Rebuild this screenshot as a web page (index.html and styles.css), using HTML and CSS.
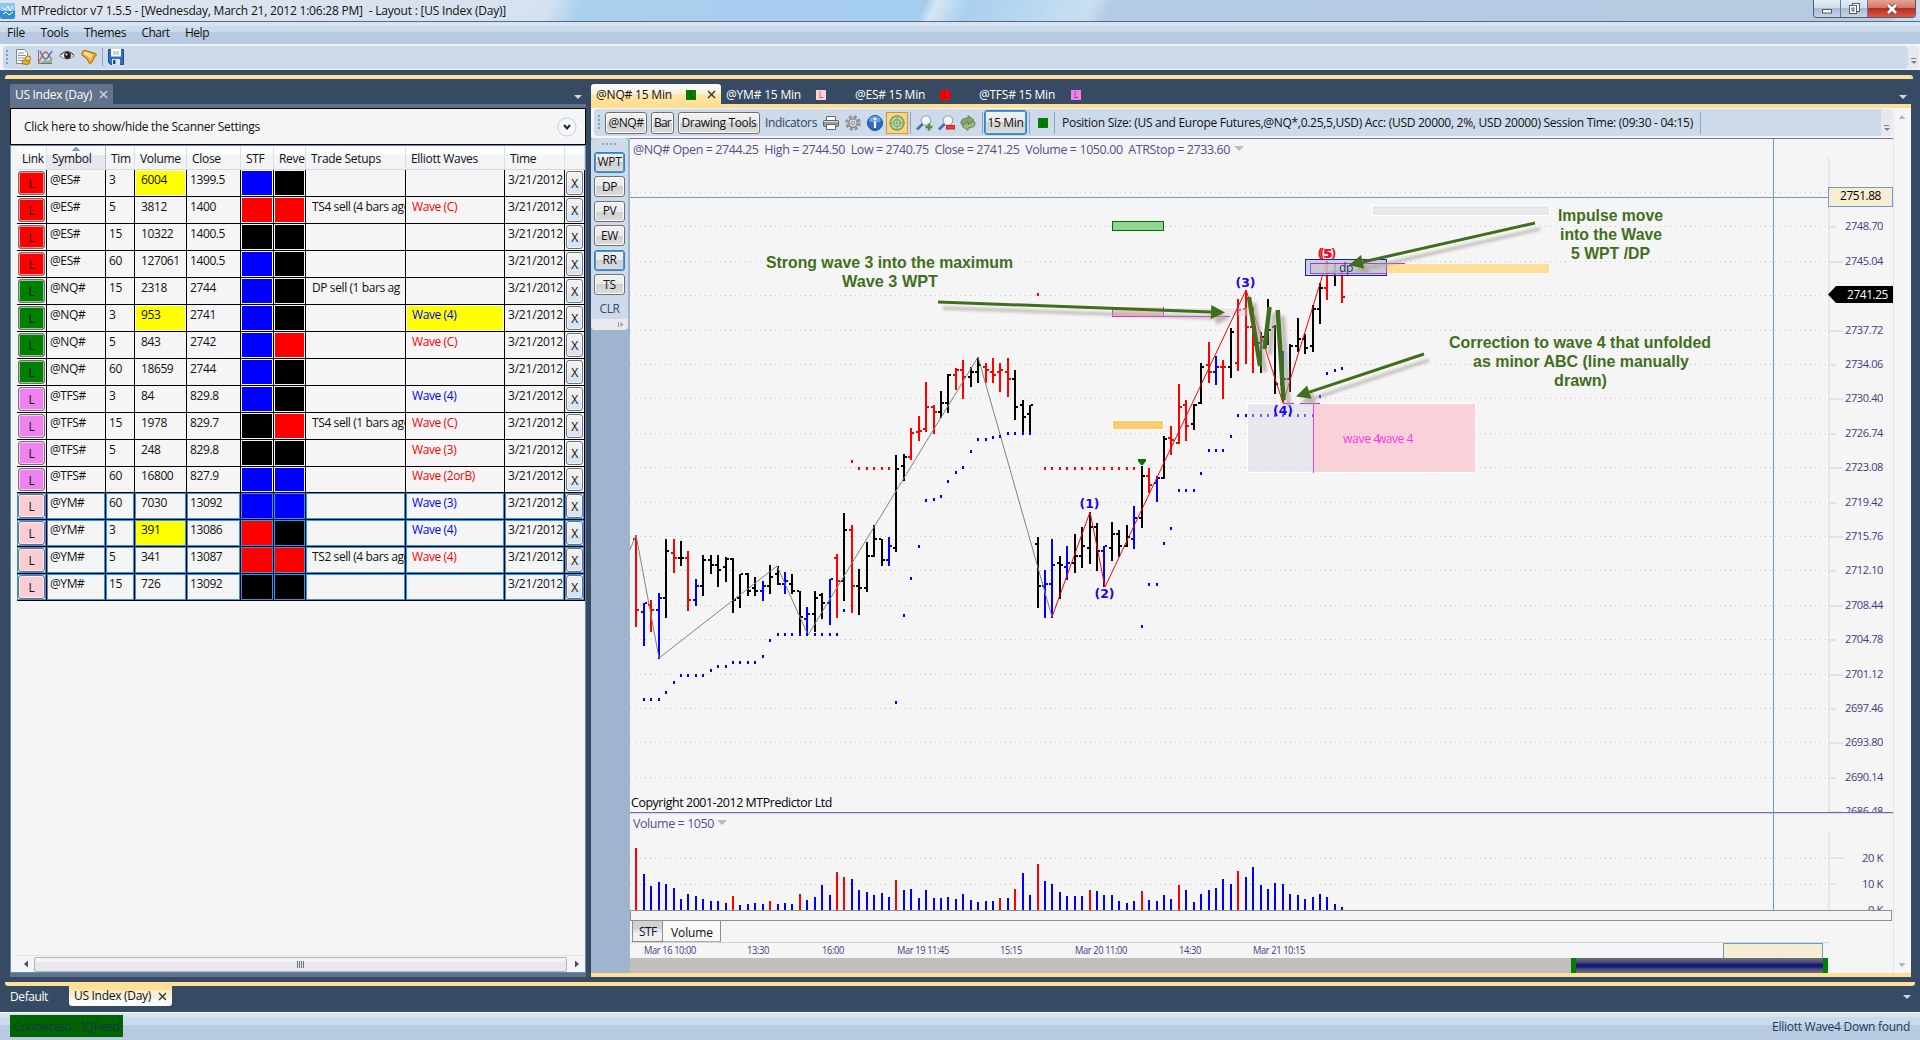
FILE: index.html
```
<!DOCTYPE html>
<html lang="en">
<head>
    <meta charset="UTF-8">
    <title>MTPredictor v7 1.5.5</title>
    <link rel="stylesheet" href="styles.css">
</head>

<body>

    <header class="titlebar">
        <svg class="app-icon" width="16" height="17" viewBox="0 0 16 17">
            <rect width="15" height="16" y="1" rx="2" fill="#2f8fd0"/>
            <rect width="15" height="8" y="1" rx="2" fill="#8cc9ee"/>
            <path d="M2 5l3 3 3-4 2 5 3-5M3 12l3-2 3 3 4-3" stroke="#fff" fill="none"/>
        </svg>
        <span class="title-text" data-w="485">MTPredictor v7 1.5.5 - [Wednesday, March 21, 2012 1:06:28 PM]&nbsp; - Layout : [US Index (Day)]</span>
        <div class="window-buttons">
            <div class="win-btn"><svg width="12" height="12"><rect x="1.5" y="6.5" width="9" height="3.5" fill="#fff" stroke="#555d6b"/></svg></div>
            <div class="win-btn"><svg width="13" height="13"><rect x="4.500" y="1.500" width="7" height="8" fill="#fff" stroke="#555d6b"/><rect x="1.500" y="3.500" width="7" height="8" fill="#fff" stroke="#555d6b"/><rect x="4" y="6" width="2" height="3" fill="none" stroke="#555d6b"/></svg></div>
            <div class="win-btn close"><svg width="14" height="12"><path d="M3 2l8 8M11 2l-8 8" stroke="#5b3a40" stroke-width="4.500"/><path d="M3 2l8 8M11 2l-8 8" stroke="#fff" stroke-width="2.800"/></svg></div>
        </div>
    </header>

    <nav class="menubar">
        <span data-w="18">File</span>
        <span data-w="28">Tools</span>
        <span data-w="42">Themes</span>
        <span data-w="28">Chart</span>
        <span data-w="24">Help</span>
    </nav>

    <div class="main-toolbar">
        <div class="toolbar-body">
            <i class="grip"></i>
            <svg width="16" height="16" viewBox="0 0 16 16"><path d="M1.500.5h8l3 3v11h-11z" fill="#fff" stroke="#7f8894"/><path d="M3 4h6M3 6.500h8M3 9h8M3 11.500h5" stroke="#8a929c"/><ellipse cx="11" cy="13" rx="4" ry="2.500" fill="#e2ad32" stroke="#a8730f"/><ellipse cx="13" cy="9.500" rx="2.600" ry="2.500" fill="#f5cf63" stroke="#a8730f"/></svg>
            <svg width="16" height="16" viewBox="0 0 16 16"><path d="M1.500 1v13.500H15" stroke="#777" fill="none"/><path d="M2 13L6 5q3-4 5 0l4 6" stroke="#e05a4a" fill="none" stroke-width="1.400"/><path d="M3 2l3 6q3 4 5 0l4-6" stroke="#4b74b8" fill="none" stroke-width="1.400"/><path d="M3 14l5-3 3 1 4-3v5z" fill="#8cb98a"/></svg>
            <svg width="16" height="16" viewBox="0 0 16 16"><path d="M.5 7Q8-1 15.500 7 8 13 .5 7z" fill="#e9e9ec" stroke="#8c8c92"/><path d="M1 6Q8-1 15 6" stroke="#444" fill="none"/><circle cx="8.500" cy="6.500" r="3.400" fill="#222"/><circle cx="7.500" cy="5.500" r="1" fill="#fff"/></svg>
            <svg width="16" height="16" viewBox="0 0 16 16"><path d="M1 4Q2 0 6 2l7 2 2 1q1 2-1 2l-3 6q-1 3-3 1Q7 9 2 7 0 6 1 4z" fill="#f0a830" stroke="#a96a12"/><path d="M2.500 4q2-2 5 0l4 2-2 5Q8 7 3 5.500z" fill="#fbdf95"/></svg>
            <i class="sep"></i>
            <svg width="16" height="16" viewBox="0 0 16 16"><path d="M.5.500h15v15h-13l-2-2z" fill="#2f6fc2" stroke="#1d4f98"/><rect x="3" y="0" width="10" height="7.500" fill="#fff"/><path d="M5 3h6M5 5h6" stroke="#8aa8d0"/><rect x="4" y="10" width="8" height="6" fill="#dfe6f0"/><rect x="5" y="11" width="2.500" height="4" fill="#1d4f98"/></svg>
        </div>
        <div class="overflow"><svg width="6" height="8"><path d="M0 .5h5" stroke="#7b828e"/><path d="M0 3h6L3 6z" fill="#7b828e"/></svg></div>
    </div>

    <main class="dock">
        <div class="dock-top"></div>
        <div class="panes">

            <section class="scanner">
                <div class="pane-tabs">
                    <div class="scan-tab"><span data-w="77">US Index (Day)</span><svg width="9" height="9"><path d="M1 1l7 7M8 1L1 8" stroke="#d5dbe6" stroke-width="1.300"/></svg></div>
                    <i class="tri"></i>
                </div>
                <div class="scan-settings">
                    <span data-w="236">Click here to show/hide the Scanner Settings</span>
                    <svg width="20" height="20"><circle cx="10" cy="10" r="9" fill="#f7f8fa" stroke="#bcd0e6"/><path d="M7 8l3 3.500L13 8" stroke="#1e2530" stroke-width="2" fill="none"/></svg>
                </div>
                <div class="scan-body">
                    <table class="scan-table">
                        <colgroup>
                            <col class="c-link"><col class="c-symbol"><col class="c-tim"><col class="c-volume"><col class="c-close"><col class="c-stf"><col class="c-reve"><col class="c-trade"><col class="c-elliott"><col class="c-time"><col class="c-del">
                        </colgroup>
                        <thead>
                            <tr>
                                <th>Link</th><th class="sorted">Symbol</th><th>Tim</th><th>Volume</th><th>Close</th><th>STF</th><th>Reve</th><th>Trade Setups</th><th>Elliott Waves</th><th>Time</th><th></th>
                            </tr>
                        </thead>
                        <tbody id="scan-rows"></tbody>
                    </table>
                    <div class="hscroll">
                        <i class="arrow left"></i>
                        <div class="thumb"><i></i><i></i><i></i><i></i></div>
                        <i class="arrow right"></i>
                    </div>
                </div>
                <div class="pane-foot"></div>
            </section>

            <section class="chart-pane">
                <div class="chart-tabs">
                    <div class="chart-tab active"><span data-w="76">@NQ# 15 Min</span><b class="chip green">L</b><svg width="9" height="9"><path d="M1 1l7 7M8 1L1 8" stroke="#333" stroke-width="1.400"/></svg></div>
                    <div class="chart-tab ym"><span data-w="75">@YM# 15 Min</span><b class="chip pink">L</b></div>
                    <div class="chart-tab es"><span data-w="70">@ES# 15 Min</span><b class="chip red">L</b></div>
                    <div class="chart-tab tfs"><span data-w="76">@TFS# 15 Min</span><b class="chip violet">L</b></div>
                    <i class="tri"></i>
                </div>
                <div class="chart-body">
                    <div class="chart-main">
                        <div class="chart-toolbar">
                            <i class="grip"></i>
                            <button class="b-sym"><span data-w="35">@NQ#</span></button>
                            <button class="b-bar"><span data-w="17">Bar</span></button>
                            <button class="b-draw"><span data-w="75">Drawing Tools</span></button>
                            <span class="indicators"><span data-w="52">Indicators</span></span>
                            <svg class="ico" width="16" height="16" viewBox="0 0 16 16"><path d="M3.500 6V1.500h9V6" fill="#fff" stroke="#666"/><rect x=".5" y="5.500" width="15" height="6" rx="1" fill="#999ea4" stroke="#5c6167"/><path d="M3.500 9.500h9v5h-9z" fill="#fff" stroke="#666"/><path d="M1 6.500h14" stroke="#d9dcdf"/></svg>
                            <svg class="ico" width="16" height="16" viewBox="0 0 16 16"><circle cx="8" cy="8" r="6.500" fill="none" stroke="#8d9094" stroke-width="2.500" stroke-dasharray="3 2.100"/><circle cx="8" cy="8" r="4.300" fill="#e0e2e4" stroke="#8d9094" stroke-width="1.800"/><circle cx="8" cy="8" r="1.800" fill="#ccdaea" stroke="#8d9094"/></svg>
                            <svg class="ico" width="16" height="16" viewBox="0 0 16 16"><circle cx="8" cy="8" r="7.500" fill="#2a6cc4" stroke="#1c4d94"/><path d="M2 6a6 5 0 0 1 12 0q-6 3-12 0z" fill="#6ea5e4"/><circle cx="8" cy="4" r="1.300" fill="#fff"/><path d="M8 6.500V13" stroke="#fff" stroke-width="2.200"/></svg>
                            <div class="target"><svg width="16" height="16" viewBox="0 0 16 16"><circle cx="8" cy="8" r="6.800" fill="#c9dcae" stroke="#7fa766" stroke-width="1.800"/><circle cx="8" cy="8" r="3.600" fill="none" stroke="#7fa766" stroke-width="1.500"/><path d="M8 0v16M0 8h16" stroke="#86a972"/></svg></div>
                            <i class="sep"></i>
                            <svg class="ico zoom" width="17" height="16" viewBox="0 0 17 16"><circle cx="10" cy="5.500" r="4.800" fill="#f3f7fb" stroke="#a5adb6" stroke-width="1.300"/><path d="M6.500 9L1 14.500" stroke="#3f6fb4" stroke-width="2.600"/><path d="M13 8.500v7M9.500 12h7" stroke="#5c8a3e" stroke-width="2.600"/></svg>
                            <svg class="ico zoom" width="17" height="16" viewBox="0 0 17 16"><circle cx="10" cy="5.500" r="4.800" fill="#f3f7fb" stroke="#a5adb6" stroke-width="1.300"/><path d="M6.500 9L1 14.500" stroke="#3f6fb4" stroke-width="2.600"/><rect x="8.500" y="10.500" width="8" height="3.500" fill="#f33" stroke="#c22"/></svg>
                            <svg class="ico" width="16" height="16" viewBox="0 0 16 16"><path d="M1 9Q0 3 8 3V.5L14 5 8 9V6.500q-3 0-4 3z" fill="#84a868" stroke="#587a43" stroke-width=".8"/><path d="M15 7q1 6-7 6v2.500L2 11l6-4v2.500q3 0 4-3z" fill="#9dba84" stroke="#587a43" stroke-width=".8"/></svg>
                            <i class="sep"></i>
                            <button class="b-min focus"><span data-w="36">15 Min</span></button>
                            <i class="sep"></i>
                            <b class="chip green">L</b>
                            <i class="sep"></i>
                            <span class="position"><span data-w="631">Position Size: (US and Europe Futures,@NQ*,0.25,5,USD) Acc: (USD 20000, 2%, USD 20000) Session Time: (09:30 - 04:15)</span></span>
                            <i class="sep"></i>
                            <div class="overflow"><svg width="6" height="8"><path d="M0 .5h5" stroke="#7b828e"/><path d="M0 3h6L3 6z" fill="#7b828e"/></svg></div>
                        </div>
                        <div class="chart-area">
                            <aside class="side-strip">
                                <div class="side-tools">
                                    <i class="hgrip"></i>
                                    <button class="focus"><span data-w="24">WPT</span></button>
                                    <button><span>DP</span></button>
                                    <button><span>PV</span></button>
                                    <button><span>EW</span></button>
                                    <button class="focus"><span>RR</span></button>
                                    <button><span>TS</span></button>
                                    <span class="clr"><span data-w="20">CLR</span></span>
                                </div>
                                <div class="side-end"><svg width="6" height="5"><path d="M.5 0v5" stroke="#999"/><path d="M2.500 0l3 2.500-3 2.500z" fill="#999"/></svg></div>
                            </aside>
                            <div class="charts">
                                <svg id="price" class="price" width="1263" height="674" viewBox="630 138 1263 674"></svg>
                                <svg id="volume" class="volume" width="1263" height="98" viewBox="630 812 1263 98"></svg>
                                <div class="splitter"></div>
                                <div class="sub-tabs"><span class="stf">STF</span><span class="vol">Volume</span></div>
                                <svg id="timeline" width="1263" height="15" viewBox="630 943 1263 15"></svg>
                                <div class="range"><i class="rest"></i><i class="handle"></i><i class="window"></i><i class="handle"></i></div>
                            </div>
                        </div>
                    </div>
                    <div class="vscroll"><i class="up"></i><i class="down"></i></div>
                </div>
                <div class="chart-foot"></div>
            </section>
        </div>
        <div class="layout-line"></div>
        <div class="layout-tabs">
            <span class="default"><span data-w="38">Default</span></span>
            <div class="layout-tab"><span data-w="77">US Index (Day)</span><svg width="9" height="9"><path d="M1 1l7 7M8 1L1 8" stroke="#333" stroke-width="1.400"/></svg></div>
            <i class="tri"></i>
        </div>
    </main>

    <footer class="statusbar">
        <div class="connected"><span data-w="107">Connected - IQFeed</span></div>
        <span data-w="138">Elliott Wave4 Down found</span>
    </footer>

    <script src="script.js"></script>
</body>
</html>
```
FILE: styles.css
```
* {
    box-sizing: border-box;
}

body {
    margin: 0;
    width: 1920px;
    height: 1040px;
    overflow: hidden;
    display: flex;
    flex-direction: column;
    font: 12px/16px "Open Sans", "Noto Sans", sans-serif;
    letter-spacing: -0.4px;
    color: #111;
    background: #374a63;
}

svg {
    display: block;
    flex: none;
}

span {
    white-space: nowrap;
}

/* title and menu */
.titlebar {
    height: 22px;
    display: flex;
    align-items: flex-start;
    border-bottom: 1px solid #566a82;
    background: linear-gradient(115deg, #dfe5ee 0, #d6e1ef 500px, #a9cfee 530px, #a5cdee 840px, #d7e6f4 850px, #a9cfee 880px, #c9dff2 990px, #b3cbe5 1010px, #b7cae0 1720px, #cddcec 1730px, #c9dbee 1800px, #a9cdee 1830px);
}

.app-icon {
    margin-top: 2px;
}

.title-text {
    margin: 3px 0 0 5px;
}

.window-buttons {
    display: flex;
    margin-left: auto;
    margin-right: 4px;
    height: 18px;
    border: 1px solid #4f5d70;
    border-top: 0;
    border-radius: 0 0 4px 4px;
    overflow: hidden;
}

.win-btn {
    width: 27px;
    display: flex;
    align-items: center;
    justify-content: center;
    border-right: 1px solid #6b7a8e;
    background: linear-gradient(#e4ecf5 0, #cfdbe9 50%, #a9bbd1 50%, #c5d5e7 100%);
}

.win-btn.close {
    width: 47px;
    border: 0;
    background: linear-gradient(#e6a497 0, #d4705f 50%, #b52d1b 50%, #d8594a 100%);
}

.menubar {
    height: 22px;
    display: flex;
    gap: 15.500px;
    padding: 3px 7px 0;
    background: linear-gradient(#d6e3f2 0, #d6e3f2 4px, #ccdbeb 4px, #ccdbeb 10px, #b8cae0 10px);
}

.main-toolbar {
    height: 26px;
    display: flex;
    padding: 2px 1px 1px 3px;
    background: #f2f3f6;
}

.toolbar-body {
    flex: 1;
    display: flex;
    align-items: center;
    gap: 6px;
    padding-left: 3px;
    padding-bottom: 1px;
    border-radius: 4px;
    background: #ccdaea;
}

.toolbar-body .sep {
    margin: 0 -1px;
}

.grip {
    width: 2px;
    height: 15px;
    margin-right: 1px;
    background: repeating-linear-gradient(#7f9cc2 0 2px, transparent 2px 4px);
}

.sep {
    width: 1px;
    height: 18px;
    background: #8aa9cd;
}

.overflow {
    width: 11px;
    display: flex;
    align-items: flex-end;
    justify-content: center;
    padding-bottom: 3px;
    background: #e7e8ee;
    border-radius: 0 4px 4px 0;
}

/* dock */
.dock {
    height: 942px;
    display: flex;
    flex-direction: column;
    background: #374a63;
}

.dock-top {
    margin: 5px 7px 5px 5px;
    height: 4px;
    border-radius: 3px 3px 0 0;
    background: #ffdf95;
}

.panes {
    height: 893px;
    display: flex;
    gap: 5px;
    padding: 0 9px 0 10px;
}

.scanner {
    width: 576px;
    display: flex;
    flex-direction: column;
}

.pane-tabs {
    height: 24px;
    display: flex;
    justify-content: space-between;
    border-bottom: 4px solid #61728b;
}

.scan-tab {
    width: 103px;
    display: flex;
    align-items: center;
    justify-content: space-between;
    padding: 1px 5px 0 5px;
    color: #fff;
    background: #61728b;
    border-radius: 2px 2px 0 0;
}

.tri {
    width: 8px;
    height: 4px;
    margin: 11px 4px 0 0;
    background: #d3d7de;
    clip-path: polygon(0 0, 100% 0, 50% 100%);
}

.scan-settings {
    height: 37px;
    display: flex;
    align-items: center;
    justify-content: space-between;
    padding: 1px 8px 0 13px;
    border: 1px solid #000;
    background: #f5f5f5;
}

.scan-body {
    flex: 1;
    display: flex;
    flex-direction: column;
    justify-content: space-between;
    border: 1px solid #5f8dbd;
    background: #f5f5f5;
}

.pane-foot {
    height: 4px;
    background: #61728b;
}

.scan-table {
    width: 568px;
    margin-left: 6px;
    table-layout: fixed;
    border-spacing: 0;
}

.c-link { width: 30px; }
.c-symbol { width: 59px; }
.c-tim { width: 29px; }
.c-volume { width: 52px; }
.c-close { width: 54px; }
.c-stf { width: 33px; }
.c-reve { width: 32px; }
.c-trade { width: 100px; }
.c-elliott { width: 99px; }
.c-time { width: 60px; }
.c-del { width: 20px; }

.scan-table th {
    height: 24px;
    padding: 2px 3px 0 5px;
    overflow: hidden;
    text-align: left;
    font-weight: normal;
    letter-spacing: -0.3px;
    border-right: 1px solid #d3e0ef;
    border-bottom: 1px solid #dadada;
    background: linear-gradient(#fcfcfc 40%, #f3f4f6 40%);
}

.scan-table th.sorted {
    border-right-color: #9cc0e4;
    background:
        linear-gradient(135deg, transparent 50%, #7c9cc6 50%) 25px 1px / 4px 4px no-repeat,
        linear-gradient(225deg, transparent 50%, #7c9cc6 50%) 29px 1px / 4px 4px no-repeat,
        linear-gradient(#f6f8fa 40%, #e7e8ee 40%);
}

.scan-table td {
    height: 27px;
    padding: 2px 0 0 3px;
    overflow: hidden;
    vertical-align: top;
    white-space: nowrap;
    border-right: 1px solid #000;
    border-bottom: 1px solid #000;
}

.scan-table .short td {
    height: 26px;
    padding-top: 1px;
}

.scan-table td.wide {
    padding-left: 6px;
}

.scan-table td.fill,
.scan-table td.hot {
    box-shadow: inset 0 0 0 1px #f5f5f5;
}

.scan-table td.hot {
    background: #ff0;
}

.scan-table td.time {
    letter-spacing: -0.2px;
}

.scan-table .selected td {
    box-shadow: inset 0 0 0 1px #2f93f0;
}

.scan-table td.link,
.scan-table td.del {
    padding: 1px;
}

.link-btn,
.del-btn {
    height: 24px;
    padding-top: 4px;
    text-align: center;
    border: 1px solid #707070;
    border-radius: 3px;
    box-shadow: inset 0 0 0 1px #ffffff90;
}

.short .link-btn,
.short .del-btn {
    height: 23px;
}

.del-btn {
    width: 17px;
    background: linear-gradient(#f2f2f2 0, #ebebeb 60%, #d5e3f2 60%);
}

.scan-table .up {
    color: #00f;
}

.scan-table .down {
    color: #f00;
}

.hscroll {
    height: 17px;
    display: flex;
    align-items: center;
    margin-left: 6px;
    padding: 0 6px 0 7px;
    border-top: 1px solid #e4e4e8;
}

.arrow {
    width: 4px;
    height: 7px;
    background: #3a4c86;
}

.arrow.left {
    clip-path: polygon(100% 0, 100% 100%, 0 50%);
}

.arrow.right {
    clip-path: polygon(0 0, 100% 50%, 0 100%);
}

.thumb {
    flex: 1;
    height: 15px;
    margin: 0 8px 0 6px;
    display: flex;
    align-items: center;
    justify-content: center;
    gap: 1px;
    border: 1px solid #b2b3ba;
    border-radius: 2px;
    background: linear-gradient(#f3f3f5 30%, #e8e7ec 30%);
}

.thumb i {
    width: 1px;
    height: 7px;
    background: #6a7288;
}

/* chart pane */
.chart-pane {
    width: 1320px;
    display: flex;
    flex-direction: column;
}

.chart-tabs {
    height: 24px;
    display: flex;
    color: #fff;
    border-bottom: 4px solid #ffdf95;
}

.chart-tab {
    display: flex;
    align-items: center;
    justify-content: space-between;
    padding: 1px 5px 0 5px;
}

.chart-tab.active {
    width: 130px;
    color: #111;
    border-radius: 3px 3px 0 0;
    background: linear-gradient(#fafafa 0, #f8f2e0 50%, #ffe5a8 50%, #ffdf95 100%);
}

.chart-tab.active .chip {
    margin-left: 4px;
}

.chart-tab.ym { width: 110px; }
.chart-tab.es { width: 124px; padding-left: 24px; }
.chart-tab.tfs { width: 131px; padding-left: 24px; }

.chart-tabs .tri {
    margin-left: auto;
}

.chip {
    width: 10px;
    height: 10px;
    font-size: 9px;
    line-height: 10px;
    font-weight: normal;
    text-align: center;
    color: #00000090;
}

.green { background: #008000; }
.pink { background: #ffd0d6; }
.red { background: #f00; }
.violet { background: #ee82ee; }

.chart-body {
    height: 865px;
    display: flex;
    background: #f5f5f5;
}

.chart-foot {
    height: 4px;
    background: #ffdf95;
}

.chart-main {
    width: 1302px;
}

.vscroll {
    width: 17px;
    display: flex;
    flex-direction: column;
    justify-content: space-between;
    align-items: center;
    padding: 7px 0 6px;
    border-left: 1px solid #e6e6ea;
}

.vscroll i {
    width: 7px;
    height: 4px;
    background: #a2b9d6;
}

.vscroll .up {
    clip-path: polygon(50% 0, 100% 100%, 0 100%);
}

.vscroll .down {
    clip-path: polygon(0 0, 100% 0, 50% 100%);
}

.chart-toolbar {
    height: 27px;
    margin: 1px 1px 2px 3px;
    display: flex;
    align-items: center;
    border-radius: 4px;
    background: #ccdaea;
}

.chart-toolbar > * {
    flex: none;
}

.chart-toolbar .grip {
    margin: 0 5px 0 4px;
}

.chart-toolbar .overflow {
    height: 27px;
    margin-left: auto;
}

button {
    display: flex;
    align-items: center;
    justify-content: center;
    height: 22px;
    padding: 0;
    font: inherit;
    letter-spacing: inherit;
    color: #111;
    border: 1px solid #707070;
    border-radius: 3px;
    background: linear-gradient(#f2f2f2 0, #e9e9ea 50%, #d0d0d0 50%, #dcdcdc 100%);
    box-shadow: inset 0 0 0 1px #fafafa;
}

button.focus {
    border-color: #3c7fb1;
    box-shadow: inset 0 0 0 1px #3d9be9;
}

.b-sym { width: 42px; margin-right: 4px; }
.b-bar { width: 23px; margin-right: 4px; }
.b-draw { width: 82px; }
.b-min { width: 43px; height: 25px; margin: 0 2px 0 1px; }

.indicators {
    width: 63px;
    padding-left: 5px;
    color: #2c4468;
}

.ico {
    margin-right: 6px;
}

.ico.zoom {
    margin-right: 5px;
}

.target {
    width: 22px;
    height: 22px;
    display: flex;
    align-items: center;
    justify-content: center;
    margin: 0 2px 0 -3px;
    border: 1px solid #c69a45;
    background: #ffd27d;
}

.target + .sep {
    margin-right: 5px;
}

.chart-toolbar .chip {
    margin: 0 6px 0 8px;
}

.chart-toolbar .sep {
    height: 22px;
}

.position {
    width: 645px;
    padding-left: 7px;
}

.chart-area {
    height: 835px;
    display: flex;
}

.side-strip {
    width: 39px;
    background: #a1b4cd;
}

.side-tools {
    width: 37px;
    height: 181px;
    display: flex;
    flex-direction: column;
    align-items: center;
    gap: 3.500px;
    padding-top: 5px;
    background: #ccdaea;
    border-radius: 4px 4px 0 0;
}

.side-tools button {
    width: 31px;
    height: 21px;
    flex: none;
}

.hgrip {
    width: 15px;
    height: 2px;
    margin-bottom: 3px;
    background: repeating-linear-gradient(90deg, #8ba5c7 0 2px, transparent 2px 4px);
}

.clr {
    padding-top: 2px;
    color: #3a4c6a;
}

.side-end {
    width: 37px;
    height: 11px;
    display: flex;
    align-items: center;
    justify-content: flex-end;
    padding-right: 4px;
    background: #e8e8ee;
    border-radius: 0 0 4px 4px;
}

.charts {
    width: 1263px;
    background: #f5f5f5;
}

.splitter {
    width: 1262px;
    height: 11px;
    border: 1px solid #8f8f8f;
}

.sub-tabs {
    width: 1199px;
    height: 22px;
    display: flex;
    padding-left: 2px;
    border-bottom: 1px solid #d4d4d4;
    letter-spacing: -0.1px;
}

.stf {
    width: 31px;
    height: 21px;
    padding: 3px 0 0 6px;
    letter-spacing: -0.6px;
    border: 1px solid #8c8e94;
    border-top: 0;
    background: linear-gradient(#d2d2d2 38%, #d3e0f0 38%, #e6eaf0 60%, #f0f0f0 60%);
}

.vol {
    width: 58px;
    padding: 4px 0 0 8px;
    border-right: 1px solid #8c8e94;
    border-bottom: 1px solid #a5b1ae;
    background: #f8f8f8;
}

.range {
    width: 1198px;
    height: 15px;
    display: flex;
    background: #c0bfbd;
}

.range .rest { width: 941px; }
.range .handle { width: 5px; background: #008000; }
.range .window {
    width: 247px;
    background: linear-gradient(#6a727c, #474775 30%, #16167c 45%, #16167c 58%, #474775 72%, #6a727c);
}

/* svg text and grid */
.axis {
    font-size: 11px;
    fill: #413c82;
}

.info {
    fill: #554d8c;
}

.times {
    font-size: 10px;
}

.wave {
    font: bold 12.500px "DejaVu Sans", sans-serif;
    letter-spacing: 0;
    text-anchor: middle;
    fill: #2000f0;
}

.wave.hit {
    fill: #f01030;
}

.note {
    font: bold 16.500px "Liberation Sans", sans-serif;
    letter-spacing: 0;
    fill: #3f6f1c;
}

.grid {
    stroke: #cbcbcb;
    stroke-dasharray: 1 4;
}

/* bottom */
.layout-line {
    height: 4px;
    margin: 5px 5px 0 5px;
    border-radius: 0 0 3px 3px;
    background: #ffdf95;
}

.layout-tabs {
    height: 26px;
    display: flex;
    color: #fff;
}

.default {
    width: 59px;
    margin: 3px 0 0 10px;
}

.layout-tab {
    width: 103px;
    height: 20px;
    display: flex;
    align-items: center;
    justify-content: space-between;
    padding: 0 5px;
    color: #111;
    border-radius: 0 0 3px 3px;
    background: linear-gradient(#ffdf95 0, #ffe3a3 5px, #f7edd1 5px, #f8f1dc 13px, #fafafa 13px);
}

.layout-tabs .tri {
    margin: 9px 9px 0 auto;
}

.statusbar {
    height: 28px;
    display: flex;
    justify-content: space-between;
    padding: 0 10px;
    line-height: 28px;
    color: #1f3a60;
    border-top: 1px solid #fff;
    background: linear-gradient(#d5e3f2 0, #d5e3f2 4px, #ccdbeb 4px, #ccdbeb 12px, #b8cae0 12px);
}

.connected {
    width: 113px;
    height: 22px;
    margin-top: 2px;
    padding-left: 3px;
    line-height: 23px;
    color: #12384a;
    background: #006400;
}
```
FILE: script.js
```
const COLORS = { k: '#000', r: '#f00', b: '#00f' };
const LINK = { ES: '#ff0000', NQ: '#008000', TFS: '#ee82ee', YM: '#facdd5' };

// symbol, interval, volume, close, stf, reversal, setup, wave, wave class, flags
const rows = [
    ['ES', 3, 6004, '1399.5', 'b', 'k', '', '', '', 'v'],
    ['ES', 5, 3812, '1400', 'r', 'r', 'TS4 sell (4 bars ago)', 'Wave (C)', 'down', ''],
    ['ES', 15, 10322, '1400.5', 'k', 'k', '', '', '', ''],
    ['ES', 60, 127061, '1400.5', 'b', 'k', '', '', '', ''],
    ['NQ', 15, 2318, '2744', 'b', 'k', 'DP sell (1 bars ag', '', '', ''],
    ['NQ', 3, 953, '2741', 'b', 'k', '', 'Wave (4)', 'up', 'vw'],
    ['NQ', 5, 843, '2742', 'b', 'r', '', 'Wave (C)', 'down', ''],
    ['NQ', 60, 18659, '2744', 'b', 'k', '', '', '', ''],
    ['TFS', 3, 84, '829.8', 'b', 'k', '', 'Wave (4)', 'up', ''],
    ['TFS', 15, 1978, '829.7', 'k', 'r', 'TS4 sell (1 bars ago)', 'Wave (C)', 'down', ''],
    ['TFS', 5, 248, '829.8', 'k', 'k', '', 'Wave (3)', 'down', ''],
    ['TFS', 60, 16800, '827.9', 'b', 'b', '', 'Wave (2orB)', 'down', 's'],
    ['YM', 60, 7030, '13092', 'b', 'b', '', 'Wave (3)', 'up', 'x'],
    ['YM', 3, 391, '13086', 'r', 'k', '', 'Wave (4)', 'up', 'xv'],
    ['YM', 5, 341, '13087', 'r', 'r', 'TS2 sell (4 bars ago)', 'Wave (4)', 'down', 'x'],
    ['YM', 15, 726, '13092', 'k', 'k', '', '', '', 'x']
];

document.getElementById('scan-rows').innerHTML = rows.map(r => {
    const f = r[9];
    const cls = f.includes('x') ? 'selected' : f.includes('s') ? 'short' : '';
    return `<tr class="${cls}">
        <td class="link"><div class="link-btn" style="background:${LINK[r[0]]}">L</div></td>
        <td>@${r[0]}#</td>
        <td>${r[1]}</td>
        <td class="wide ${f.includes('v') ? 'hot' : ''}">${r[2]}</td>
        <td>${r[3]}</td>
        <td class="fill" style="background:${COLORS[r[4]]}"></td>
        <td class="fill" style="background:${COLORS[r[5]]}"></td>
        <td class="wide">${r[6]}</td>
        <td class="wide ${r[8]} ${f.includes('w') ? 'hot' : ''}">${r[7]}</td>
        <td class="time">3/21/2012</td>
        <td class="del"><div class="del-btn">X</div></td>
    </tr>`;
}).join('');

// price bars: color, high, low, open, close (y positions)
const bars = `r 535 627 539 610|b 603 646 612 603|r 600 632 605 610|b 593 659 610 598|k 539 618 598 551|r 539 573 553 558|k 541 566 558 558|r 551 611 558 600
b 579 606 600 586|k 555 596 586 560|k 555 574 560 565|k 555 587 565 570|k 557 582 567 559|k 558 613 559 600|k 574 608 598 574|k 573 596 574 591
k 577 596 588 591|b 581 601 591 586|k 565 594 586 577|k 566 585 574 584|b 572 594 584 581|k 574 594 584 591|k 591 635 591 617|b 607 635 619 614
k 591 632 614 598|k 593 619 595 603|b 579 625 603 579|r 554 618 558 581|k 513 601 581 530|r 525 613 530 586|k 569 615 586 588|k 542 592 588 556
k 525 557 556 539|k 539 566 539 560|b 537 566 560 546|k 455 552 548 469|k 454 481 466 457|r 428 460 457 433|r 416 441 432 431|r 382 432 429 407
r 405 434 407 412|k 391 418 412 403|k 374 413 403 375|r 368 390 375 370|r 360 399 370 377|k 367 387 377 372|k 357 383 372 365|r 363 383 367 370
r 358 383 372 375|r 363 392 372 370|r 358 397 372 379|k 370 420 379 407|k 400 435 405 417|k 405 435 414 405|k 537 608 544 586|b 570 618 586 584
b 539 618 584 565|k 556 599 563 565|b 546 580 567 563|k 534 573 563 556|k 527 568 556 546|k 512 564 548 527|k 523 571 527 551|b 546 587 551 546
k 522 561 548 534|k 530 557 534 546|k 525 547 546 537|b 506 549 539 518|k 466 528 518 476|r 468 493 476 485|b 476 502 483 478|k 436 479 478 439
r 426 455 438 440|r 384 444 443 407|r 400 441 405 426|k 404 430 424 405|k 363 404 403 367|r 342 383 365 372|b 356 385 372 367|r 360 399 367 367
k 328 378 367 332|r 299 371 363 310|r 290 364 309 327|r 307 373 327 345|k 332 373 343 337|k 299 345 337 330|k 325 394 327 384|b 351 401 384 379
k 344 392 379 346|k 318 352 346 339|k 334 354 339 348|k 305 352 346 309|k 283 324 309 288|r 261 300 288 273|k 264 286 272 271|r 270 303 272 297`
    .split(/[|\n]/).map(s => s.split(' '));

// trailing stop dots: first bar, last bar, y, color
const stops = [
    [1, 3, 700], [4, 4, 693], [5, 5, 683], [6, 9, 676], [10, 10, 671], [11, 12, 667], [13, 16, 663], [17, 17, 657],
    [18, 18, 641], [19, 27, 635], [28, 28, 611], [29, 29, 462, 'r'], [30, 34, 469, 'r'], [35, 35, 703], [36, 36, 616],
    [37, 37, 579], [38, 38, 547], [39, 39, 501], [40, 40, 500], [41, 41, 497], [42, 42, 482], [43, 43, 473],
    [44, 44, 468], [45, 45, 452], [46, 47, 440], [48, 48, 438], [49, 49, 437], [50, 53, 434], [54, 54, 295, 'r'],
    [55, 67, 469, 'r'], [68, 68, 627], [69, 70, 585], [71, 71, 544], [72, 72, 529], [73, 75, 491], [76, 76, 474],
    [77, 79, 451], [80, 80, 437], [81, 91, 416], [92, 92, 397], [93, 93, 374], [94, 94, 371], [95, 95, 369]
];

const volumes = [62, 36, 24, 28, 26, 22, 11, 16, 14, 11, 9, 9, 7, 14, 5, 6, 7, 6, 9, 6, 7, 6, 16, 10, 13, 25, 15, 38, 33, 31,
    20, 18, 15, 17, 13, 30, 20, 21, 12, 20, 12, 12, 13, 11, 16, 10, 8, 9, 9, 12, 12, 21, 37, 15, 46, 29, 26, 18, 14, 14, 14,
    20, 19, 15, 15, 9, 7, 9, 19, 10, 9, 15, 11, 25, 20, 8, 16, 20, 22, 31, 26, 39, 33, 43, 25, 21, 27, 26, 16, 15, 11, 13,
    16, 13, 6, 3];
const redVolumes = [0, 13, 18, 22, 27, 28, 35, 49, 51, 54, 61, 68, 73, 81];

const barX = i => Math.round(635.4 + i * 7.43);
const rect = (x, y, w, h, attrs) => `<rect x="${x}" y="${y}" width="${w}" height="${h}" ${attrs}/>`;
const line = (x1, y1, x2, y2, attrs) => `<path d="M${x1} ${y1}L${x2} ${y2}" ${attrs}/>`;
const text = (x, y, w, cls, str) => `<text x="${x}" y="${y}" class="${cls}" textLength="${w}" lengthAdjust="spacingAndGlyphs">${str}</text>`;

function arrow(x1, y1, x2, y2) {
    const a = Math.atan2(y2 - y1, x2 - x1);
    const bx = x2 - 14 * Math.cos(a), by = y2 - 14 * Math.sin(a);
    const px = 7 * Math.sin(a), py = -7 * Math.cos(a);
    return `<path d="M${x1} ${y1}L${bx} ${by}" stroke-width="3"/>
        <path d="M${x2} ${y2}L${bx + px} ${by + py}L${bx - px} ${by - py}z" stroke="none"/>`;
}

function drawPrice() {
    let s = `<defs><filter id="soft" x="-20%" y="-50%" width="140%" height="200%"><feGaussianBlur stdDeviation="1.6"/></filter></defs>`;
    s += rect(630, 138, 1263, 1, 'fill="#6f6db0"');
    for (let i = 0; i < 18; i++) {
        const y = Math.round(192 + i * 34.4) + .5;
        s += line(630, y, 1828, y, 'class="grid"');
    }
    s += rect(1828, 158, 2, 654, 'fill="#e6e6ec"');
    for (let i = 1; i < 19; i++) {
        const y = Math.round(192 + i * 34.4);
        s += rect(1829, y, i % 2 ? 7 : 14, 2, 'fill="#dbe3ec"');
        if (i !== 3) s += text(1845, y + 4, 38, 'axis', (2752.36 - i * 3.66).toFixed(2));
    }

    // zones
    s += rect(1112.5, 221.5, 51, 9, 'fill="#90d890" stroke="#0a6b0a"');
    s += rect(1164.5, 307.5, 89, 9, 'fill="#e8e7ec" stroke="#fff"');
    s += rect(1112.5, 307.5, 51, 9, 'fill="#f0c4c4" stroke="none"');
    s += rect(1112, 307, 1, 10, 'fill="#d030d0"') + rect(1163, 307, 1, 10, 'fill="#d030d0"');
    s += rect(1112, 316, 118, 1, 'fill="#e010e0"');
    s += rect(1112.5, 420.5, 51, 9, 'fill="#fbcd70" stroke="#fff"');
    s += rect(1372.5, 205.5, 177, 10, 'fill="#e8e7ec" stroke="#fff"');
    s += rect(1387, 264, 162, 9, 'fill="#ffdf95"');

    // swings and bars
    bars.forEach(([c, hi, lo, op, cl], i) => {
        const x = barX(i), f = `fill="${COLORS[c]}"`;
        s += rect(x, hi, 2, lo - hi, f) + rect(x - 2, op - 1, 2, 2, f) + rect(x + 2, cl - 1, 2, 2, f);
    });
    s += '<path d="M629 552L636 535 659 658 777 566 808 635 978 357 1052 617" fill="none" stroke="#808080"/>';
    s += '<path d="M1052 617L1090 512 1105 587 1246 290 1283 403 1327 261" fill="none" stroke="#f00"/>';
    stops.forEach(([a, b, y, c]) => {
        for (let i = a; i <= b; i++) s += rect(barX(i), y - 2, 2, 3, `fill="${COLORS[c || 'b']}"`);
    });
    s += '<path d="M1138 459h8v2l-3 4h-2l-3-4z" fill="#087008"/>';
    s += rect(1238, 308, 15, 8, 'fill="#e8e7ec" fill-opacity=".4"');

    s += rect(1247.5, 403.5, 66, 69, 'fill="#d8d6e6" fill-opacity=".45"');
    s += rect(1313, 403, 162, 70, 'fill="#fad0d9"');
    s += rect(1247.5, 403.5, 228, 69, 'fill="none" stroke="#fff"');
    for (let y = 433; y < 472; y += 34) s += line(1314, y + .5, 1475, y + .5, 'class="grid"');
    s += rect(1313, 403, 1, 70, 'fill="#f040e0"') + rect(1283, 403, 11, 1, 'fill="#d020d0"') + rect(1300, 403, 20, 1, 'fill="#d020d0"');
    s += '<g fill="#f23ee6">' + text(1343, 443, 37, '', 'wave 4') + text(1377, 443, 36, '', 'wave 4') + '</g>';

    s += rect(1305.5, 259.5, 81, 16, 'fill="#a4c0e2" fill-opacity=".65" stroke="#1c2380"');
    s += rect(1310.5, 263.5, 76, 10, 'fill="#c9c5c2" fill-opacity=".7" stroke="#a848e8"');
    s += rect(1310, 263, 95, 1, 'fill="#d020d0"');

    s += text(1089.5, 508, 20, 'wave', '(1)') + text(1104.5, 598, 20, 'wave', '(2)');
    s += text(1245.5, 287, 20, 'wave', '(3)') + text(1283, 415, 20, 'wave', '(4)');
    s += text(1327, 258, 19, 'wave hit', '(5)') + text(1326, 258, 13, 'wave hit', '(5');

    // crosshair
    s += rect(630, 197, 1198, 1, 'fill="#6a9bd3"') + rect(1773, 139, 1, 673, 'fill="#6a9bd3"');

    // hand drawn notes
    const marks = `<path d="M1249 297L1260 366M1264.500 349L1269.500 307M1277.700 310L1283.500 400" stroke-width="4.500"/>` +
        arrow(938, 302, 1225, 312.5) + arrow(1535, 223, 1349, 265) + arrow(1424, 354, 1296, 396.5);
    s += `<g transform="translate(5 6)" fill="#aaa49c" stroke="#aaa49c" opacity=".75" filter="url(#soft)">${marks}</g>`;
    s += `<g fill="#3f6f1c" stroke="#3f6f1c">${marks}</g>`;
    s += '<g fill="#24306a">' + text(1339, 272, 14, '', 'dp') + '</g>';
    s += text(766, 268, 247, 'note', 'Strong wave 3 into the maximum') + text(842, 287, 96, 'note', 'Wave 3 WPT');
    s += text(1558, 221, 105, 'note', 'Impulse move') + text(1560, 240, 102, 'note', 'into the Wave') + text(1571, 259, 79, 'note', '5 WPT /DP');
    s += text(1449, 348, 262, 'note', 'Correction to wave 4 that unfolded') + text(1473, 367, 216, 'note', 'as minor ABC (line manually') + text(1554, 386, 53, 'note', 'drawn)');

    // price tags
    s += rect(1828.5, 187.5, 64, 19, 'fill="#f7edd1" stroke="#6a9bd3"') + text(1840, 200, 41, '', '2751.88');
    s += '<path d="M1828 294.500L1836 286h57v17h-57z"/><g fill="#fff">' + text(1847, 299, 41, '', '2741.25') + '</g>';

    s += text(633, 154, 597, 'info', '@NQ# Open = 2744.25&#160; High = 2744.50&#160; Low = 2740.75&#160; Close = 2741.25&#160; Volume = 1050.00&#160; ATRStop = 2733.60');
    s += '<path d="M1234 146h10l-5 5z" fill="#bbb"/>';
    s += text(631, 807, 201, '', 'Copyright 2001-2012 MTPredictor Ltd');
    document.getElementById('price').innerHTML = s;
}

function drawVolume() {
    let s = rect(630, 812, 1263, 1, 'fill="#6f6db0"') + rect(630, 813, 1263, 1, 'fill="#d8d6ee"');
    s += text(633, 828, 81, 'info', 'Volume = 1050') + '<path d="M717 820h10l-5 5z" fill="#bbb"/>';
    s += line(630, 858.5, 1828, 858.5, 'class="grid"') + line(630, 884.5, 1828, 884.5, 'class="grid"');
    s += rect(1828, 832, 2, 78, 'fill="#e6e6ec"') + rect(1829, 857, 14, 2, 'fill="#e3e6ec"') + rect(1829, 883, 7, 2, 'fill="#e3e6ec"');
    s += text(1862, 862, 21, 'axis', '20 K') + text(1862, 888, 21, 'axis', '10 K') + text(1868, 914, 15, 'axis', '0 K');
    volumes.forEach((v, i) => {
        s += rect(barX(i), 910 - v, 2, v, `fill="${redVolumes.includes(i) ? '#f00' : '#00f'}"`);
    });
    s += rect(1773, 812, 1, 98, 'fill="#6a9bd3"');
    document.getElementById('volume').innerHTML = s;
}

const times = [[644, 52, 'Mar 16 10:00'], [747, 22, '13:30'], [822, 22, '16:00'], [897, 52, 'Mar 19 11:45'],
    [1000, 22, '15:15'], [1075, 52, 'Mar 20 11:00'], [1179, 22, '14:30'], [1253, 52, 'Mar 21 10:15']];
document.getElementById('timeline').innerHTML =
    times.map(([x, w, t]) => text(x, 954, w, 'axis times', t)).join('') +
    rect(1723.5, 943.5, 99, 15, 'fill="#f5edd3" stroke="#6a9bd3"');

drawPrice();
drawVolume();

// fit label tracking to its slot
document.querySelectorAll('[data-w]').forEach(el => {
    el.style.letterSpacing = '0';
    const n = el.textContent.length;
    el.style.letterSpacing = ((el.dataset.w - el.getBoundingClientRect().width) / n).toFixed(3) + 'px';
});
```
